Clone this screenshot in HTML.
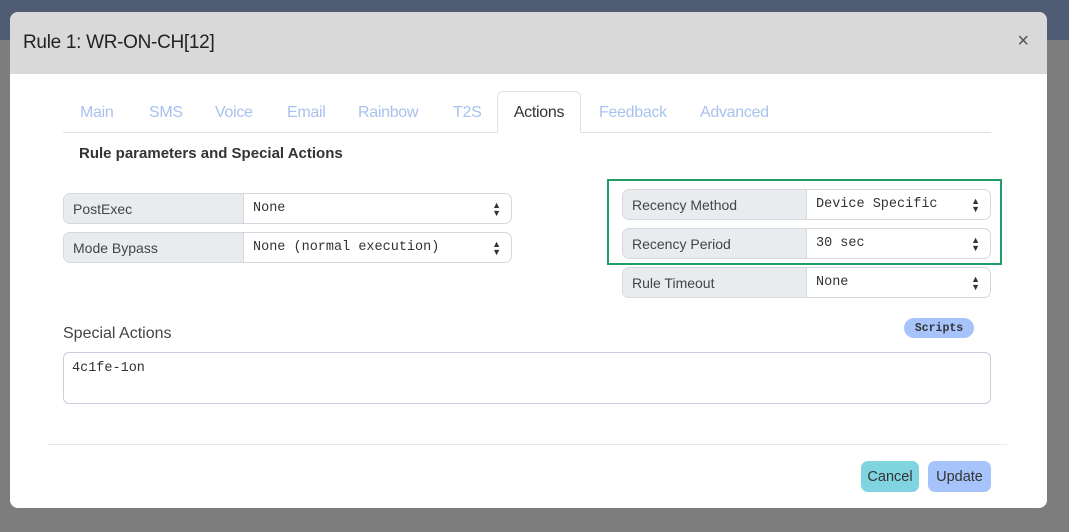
<!DOCTYPE html>
<html><head><style>
*{box-sizing:border-box;margin:0;padding:0}
body{width:1069px;height:532px;overflow:hidden;background:#7d7d7d;font-family:"Liberation Sans",sans-serif;position:relative}
.nav{position:absolute;left:0;top:0;width:1069px;height:40px;background:#505b74;color:#222;font-size:15px}
.modal{position:absolute;left:10px;top:12px;width:1037px;height:496px;background:#fff;border-radius:8px;overflow:hidden}
.hdr{height:62px;background:#d9d9d9;position:relative}
.hdr h1{position:absolute;left:13px;top:20px;font-size:19px;font-weight:normal;color:#222;letter-spacing:-0.3px}
.x{position:absolute;right:18px;top:18px;font-size:20px;color:#555}
.a{position:absolute}
.tabs{left:53px;top:120px;width:928px;border-bottom:1px solid #dee2e6;height:1px}
.tab{position:absolute;top:92px;font-size:16px;color:#a8c2ee;letter-spacing:-0.3px}
.act{position:absolute;left:487px;top:79px;width:84px;height:42px;border:1px solid #dee2e6;border-bottom:1px solid #fff;border-radius:6px 6px 0 0;background:#fff;font-size:16px;color:#333;text-align:center;line-height:42px;letter-spacing:-0.3px}
.grp{position:absolute;height:31px;border:1px solid #d5d9de;border-radius:7px;overflow:hidden;font-size:14px}
.grp .l{position:absolute;left:0;top:0;bottom:0;background:#e9ecef;border-right:1px solid #d5d9de;padding-left:9px;line-height:30px;color:#444}
.grp .v{position:absolute;top:0;bottom:0;padding-left:9px;line-height:30px;font-family:"Liberation Mono",monospace;font-size:13.5px;color:#333}
.grp .c{position:absolute;right:10px;top:7px;font-size:9px;line-height:8px;color:#333}
.btn{position:absolute;height:31px;border-radius:7px;font-size:14.5px;color:#333;text-align:center;line-height:33px}
</style></head><body>
<div class="nav"></div>
<div class="modal">
<div class="hdr"><h1>Rule 1: WR-ON-CH[12]</h1><div class="x">×</div></div>
<div class="a tabs"></div>
<div class="tab" style="left:70px">Main</div>
<div class="tab" style="left:139px">SMS</div>
<div class="tab" style="left:205px">Voice</div>
<div class="tab" style="left:277px">Email</div>
<div class="tab" style="left:348px">Rainbow</div>
<div class="tab" style="left:443px">T2S</div>
<div class="act">Actions</div>
<div class="tab" style="left:589px">Feedback</div>
<div class="tab" style="left:690px">Advanced</div>
<div class="a" style="left:69px;top:133px;font-size:15px;font-weight:bold;color:#333">Rule parameters and Special Actions</div>

<div class="grp" style="left:53px;top:181px;width:449px"><div class="l" style="width:180px">PostExec</div><div class="v" style="left:180px">None</div><div class="c">▲<br>▼</div></div>
<div class="grp" style="left:53px;top:220px;width:449px"><div class="l" style="width:180px">Mode Bypass</div><div class="v" style="left:180px">None (normal execution)</div><div class="c">▲<br>▼</div></div>

<div class="a" style="left:597px;top:167px;width:395px;height:86px;border:2px solid #1f9e6a"></div>
<div class="grp" style="left:612px;top:177px;width:369px"><div class="l" style="width:184px">Recency Method</div><div class="v" style="left:184px">Device Specific</div><div class="c">▲<br>▼</div></div>
<div class="grp" style="left:612px;top:216px;width:369px"><div class="l" style="width:184px">Recency Period</div><div class="v" style="left:184px">30 sec</div><div class="c">▲<br>▼</div></div>
<div class="grp" style="left:612px;top:255px;width:369px"><div class="l" style="width:184px">Rule Timeout</div><div class="v" style="left:184px">None</div><div class="c">▲<br>▼</div></div>

<div class="a" style="left:53px;top:313px;font-size:16px;color:#444">Special Actions</div>
<div class="a" style="left:894px;top:306px;width:70px;height:20px;background:#a6c4fb;border-radius:10px;font-family:'Liberation Mono',monospace;font-weight:bold;font-size:11.5px;text-align:center;line-height:21px;color:#333">Scripts</div>
<div class="a" style="left:53px;top:340px;width:928px;height:52px;border:1px solid #ccd;border-radius:6px;padding:8px 8px;font-family:'Liberation Mono',monospace;font-size:13.5px;color:#333">4c1fe-1on</div>

<div class="a" style="left:37px;top:432px;width:960px;border-top:1px solid #e6e8eb"></div>
<div class="btn" style="left:851px;top:449px;width:58px;background:#80d4e0">Cancel</div>
<div class="btn" style="left:918px;top:449px;width:63px;background:#a6c4fb">Update</div>
</div>
</body></html>
